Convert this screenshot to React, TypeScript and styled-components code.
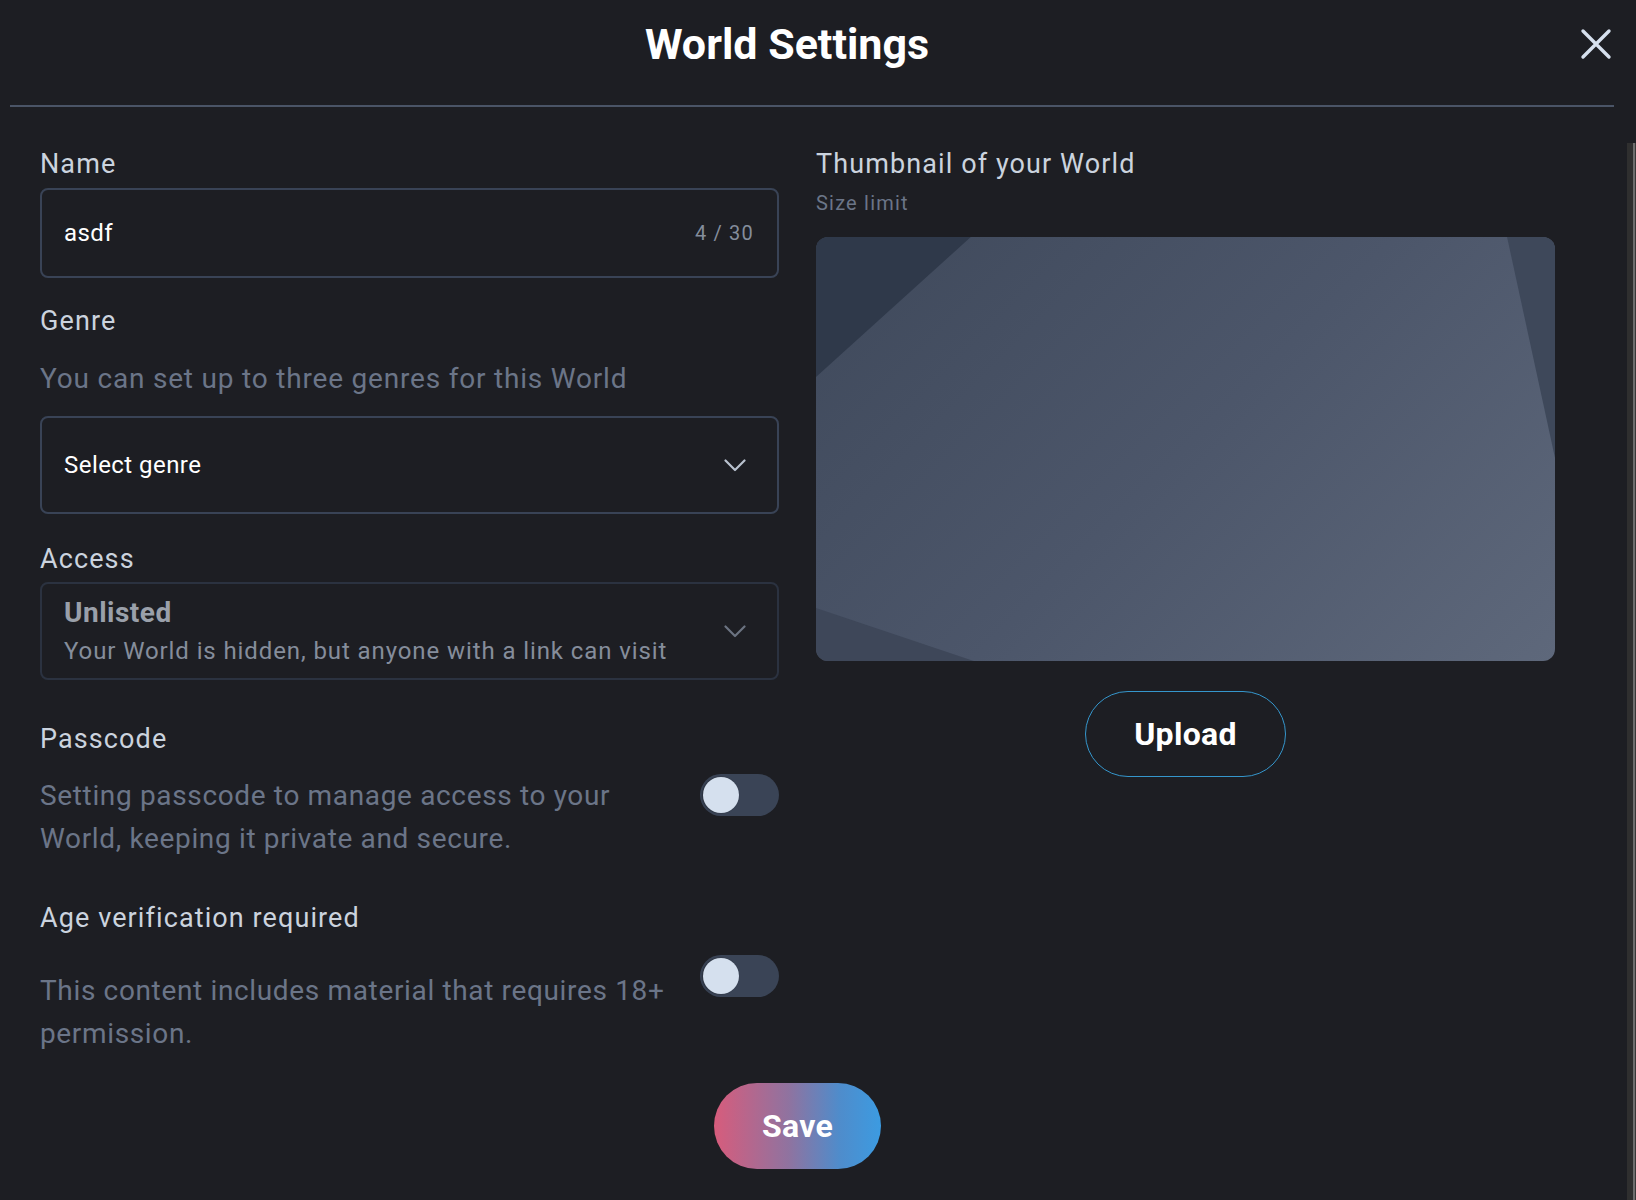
import React from "react";
import styled, { createGlobalStyle } from "styled-components";

const Global = createGlobalStyle`
  html, body { margin: 0; padding: 0; background: #1d1e23; }
  body { font-family: Roboto, "Liberation Sans", sans-serif; color: #cfd6e0; }
  * { box-sizing: border-box; }
`;

const Modal = styled.div`
  height: 100vh;
  display: flex;
  flex-direction: column;
  background: #1d1e23;
  overflow: hidden;
`;

const Header = styled.header`
  height: 105px;
  display: flex;
  align-items: flex-start;
  padding: 16px 8px 0 10px;
`;

const Title = styled.h1`
  flex: 1;
  margin: 0;
  text-align: center;
  font-size: 43px;
  line-height: 56px;
  font-weight: 700;
  color: #ffffff;
`;

const CloseButton = styled.button`
  flex: none;
  margin-top: 11px;
  width: 64px;
  height: 34px;
  padding: 0;
  border: none;
  background: transparent;
  display: flex;
  align-items: center;
  justify-content: center;
  cursor: pointer;
`;

const Divider = styled.hr`
  margin: 0 22px 0 10px;
  height: 2px;
  border: none;
  background: #4a5466;
`;

const BodyRow = styled.div`
  margin-top: 36px;
  flex: 1;
  min-height: 0;
  display: flex;
`;

const Body = styled.div`
  flex: 1;
  overflow-y: auto;
  padding: 4px 72px 0 40px;
`;

const ScrollTrack = styled.div`
  flex: none;
  width: 9px;
  background: linear-gradient(to right, #2f2f2f 0 6px, #6e6e6e 6px 8px, #383838 8px);
`;

const Grid = styled.div`
  display: grid;
  grid-template-columns: 1fr 1fr;
  column-gap: 37px;
`;

const Column = styled.div`
  display: flex;
  flex-direction: column;
`;

const Label = styled.div<{ $mt?: number }>`
  margin-top: ${(p) => p.$mt ?? 0}px;
  font-size: 27px;
  line-height: 34px;
  color: #cbd3de;
  letter-spacing: 1.1px;
`;

const Helper = styled.div<{ $mt?: number }>`
  margin-top: ${(p) => p.$mt ?? 0}px;
  font-size: 28px;
  line-height: 40px;
  color: #6b7588;
  letter-spacing: 0.8px;
`;

const Field = styled.div<{ $mt: number; $h: number; $dim?: boolean }>`
  margin-top: ${(p) => p.$mt}px;
  height: ${(p) => p.$h}px;
  border: 2px solid ${(p) => (p.$dim ? "#2b3240" : "#394356")};
  border-radius: 8px;
  display: flex;
  align-items: center;
  padding: 0 23px 0 22px;
  gap: 16px;
`;

const FieldText = styled.span`
  flex: 1;
  font-size: 24px;
  color: #ffffff;
  letter-spacing: 0.45px;
`;

const Counter = styled.span`
  font-size: 20px;
  color: #848d9c;
  letter-spacing: 1.2px;
`;

const Chevron = styled.svg<{ $dim?: boolean }>`
  width: 22px;
  height: 13px;
  margin-right: 8px;
  color: ${(p) => (p.$dim ? "#6b7381" : "#b9c2cf")};
`;

const AccessText = styled.div`
  flex: 1;
  display: flex;
  flex-direction: column;
`;

const AccessTitle = styled.span`
  font-size: 28px;
  line-height: 36px;
  font-weight: 700;
  color: #9aa0aa;
  letter-spacing: 0.5px;
`;

const AccessSub = styled.span`
  margin-top: 4px;
  font-size: 24px;
  line-height: 32px;
  color: #858d9b;
  letter-spacing: 0.9px;
`;

const ToggleRow = styled.div<{ $mt: number }>`
  margin-top: ${(p) => p.$mt}px;
  display: flex;
  align-items: flex-start;
  justify-content: space-between;
  gap: 8px;
`;

const Desc = styled.p<{ $pt?: number }>`
  flex: 1;
  margin: 0;
  padding-top: ${(p) => p.$pt ?? 0}px;
  font-size: 28px;
  line-height: 43px;
  color: #6b7588;
  letter-spacing: 0.65px;
`;

const Toggle = styled.div`
  flex: none;
  width: 79px;
  height: 42px;
  border-radius: 21px;
  background: #3a4456;
  display: flex;
  align-items: center;
  padding-left: 3px;
`;

const Knob = styled.div`
  width: 36px;
  height: 36px;
  border-radius: 50%;
  background: #d5e0ee;
  box-shadow: -1px 0 2px rgba(0, 0, 0, 0.35);
`;

const SizeLimit = styled.div`
  margin-top: 8px;
  font-size: 20px;
  line-height: 28px;
  color: #6b7588;
  letter-spacing: 1.2px;
`;

const Thumbnail = styled.div`
  margin-top: 20px;
  height: 424px;
  border-radius: 12px;
  overflow: hidden;
  background: linear-gradient(135deg, #3f495b 0%, #4c566a 50%, #5e687b 100%);
  & > svg { display: block; width: 100%; height: 100%; }
`;

const UploadButton = styled.button`
  align-self: center;
  margin-top: 30px;
  width: 201px;
  height: 86px;
  border-radius: 43px;
  border: 1.5px solid #3596cc;
  background: transparent;
  color: #ffffff;
  font-family: Roboto, "Liberation Sans", sans-serif;
  font-size: 32px;
  font-weight: 700;
  letter-spacing: 0.3px;
  cursor: pointer;
`;

const Footer = styled.div`
  display: flex;
  justify-content: center;
  margin-top: 28px;
  padding-bottom: 30px;
`;

const SaveButton = styled.button`
  width: 167px;
  height: 86px;
  border-radius: 43px;
  border: none;
  background: linear-gradient(90deg, #d75c7c 0%, #8f73a0 45%, #4f8ccb 75%, #3c9be1 100%);
  color: #ffffff;
  font-family: Roboto, "Liberation Sans", sans-serif;
  font-size: 32px;
  font-weight: 700;
  letter-spacing: 0.3px;
  cursor: pointer;
`;

const ChevronIcon = ({ dim }: { dim?: boolean }) => (
  <Chevron $dim={dim} viewBox="0 0 22 13" fill="none">
    <path d="M1.5 1.5 L11 11 L20.5 1.5" stroke="currentColor" strokeWidth="2.2" strokeLinecap="round" strokeLinejoin="round" />
  </Chevron>
);

export default function App() {
  return (
    <>
      <Global />
      <Modal>
        <Header>
          <Title>World Settings</Title>
          <CloseButton aria-label="Close">
            <svg width="32" height="32" viewBox="0 0 32 32">
              <path d="M3 3 L29 29 M29 3 L3 29" stroke="#d6e0ee" strokeWidth="3.4" strokeLinecap="round" />
            </svg>
          </CloseButton>
        </Header>
        <Divider />
        <BodyRow>
          <Body>
            <Grid>
              <Column>
                <Label>Name</Label>
                <Field $mt={7} $h={90}>
                  <FieldText>asdf</FieldText>
                  <Counter>4 / 30</Counter>
                </Field>
                <Label $mt={26}>Genre</Label>
                <Helper $mt={21}>You can set up to three genres for this World</Helper>
                <Field $mt={17} $h={98}>
                  <FieldText>Select genre</FieldText>
                  <ChevronIcon />
                </Field>
                <Label $mt={28}>Access</Label>
                <Field $mt={6} $h={98} $dim>
                  <AccessText>
                    <AccessTitle>Unlisted</AccessTitle>
                    <AccessSub>Your World is hidden, but anyone with a link can visit</AccessSub>
                  </AccessText>
                  <ChevronIcon dim />
                </Field>
                <Label $mt={42}>Passcode</Label>
                <ToggleRow $mt={18}>
                  <Desc>Setting passcode to manage access to your World, keeping it private and secure.</Desc>
                  <Toggle>
                    <Knob />
                  </Toggle>
                </ToggleRow>
                <Label $mt={41}>Age verification required</Label>
                <ToggleRow $mt={20}>
                  <Desc $pt={14}>This content includes material that requires 18+ permission.</Desc>
                  <Toggle>
                    <Knob />
                  </Toggle>
                </ToggleRow>
              </Column>
              <Column>
                <Label>Thumbnail of your World</Label>
                <SizeLimit>Size limit</SizeLimit>
                <Thumbnail>
                  <svg viewBox="0 0 740 424" preserveAspectRatio="none">
                    <polygon points="0,0 155,0 0,140" fill="#2f394a" />
                    <polygon points="692,0 740,0 740,221" fill="#3e485a" />
                    <polygon points="0,371 158,424 0,424" fill="#3e4759" />
                  </svg>
                </Thumbnail>
                <UploadButton>Upload</UploadButton>
              </Column>
            </Grid>
            <Footer>
              <SaveButton>Save</SaveButton>
            </Footer>
          </Body>
          <ScrollTrack />
        </BodyRow>
      </Modal>
    </>
  );
}
